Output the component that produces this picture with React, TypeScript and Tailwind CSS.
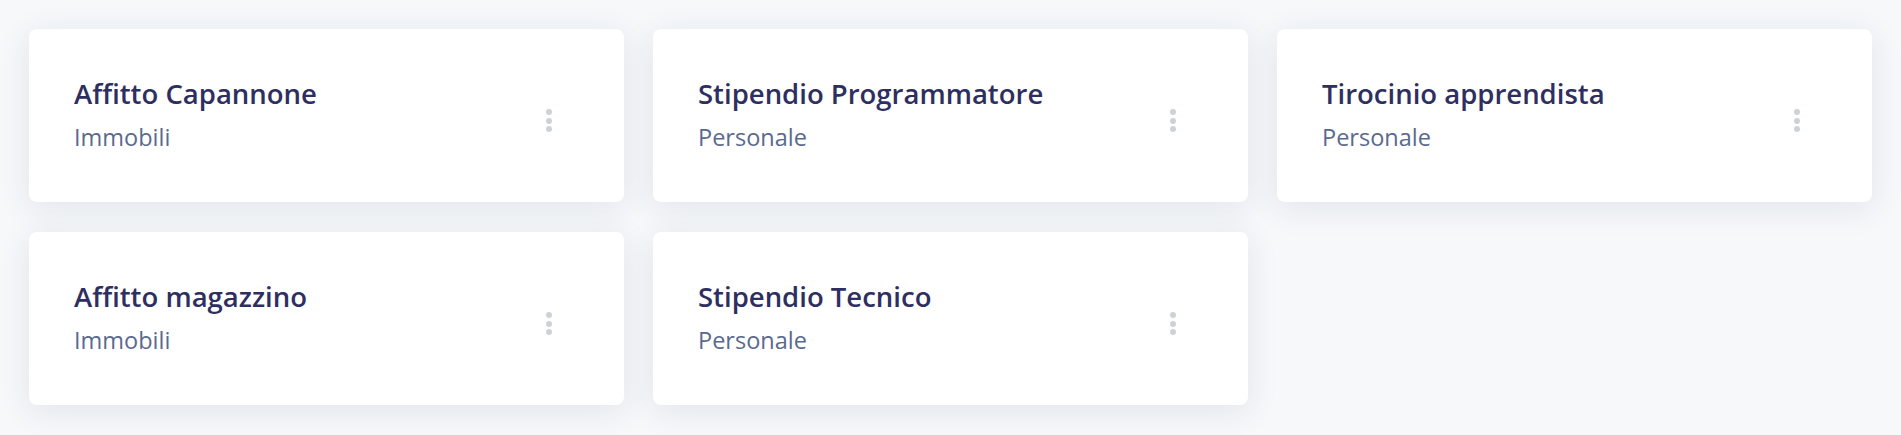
import React from "react";

const items = [
  { title: "Affitto Capannone", sub: "Immobili" },
  { title: "Stipendio Programmatore", sub: "Personale" },
  { title: "Tirocinio apprendista", sub: "Personale" },
  { title: "Affitto magazzino", sub: "Immobili" },
  { title: "Stipendio Tecnico", sub: "Personale" },
];

function Dots() {
  return (
    <div className="flex flex-col gap-[2.3px] mt-[13px]">
      <span className="block w-[6px] h-[6px] rounded-full bg-[#cdd1d8]" />
      <span className="block w-[6px] h-[6px] rounded-full bg-[#cdd1d8]" />
      <span className="block w-[6px] h-[6px] rounded-full bg-[#cdd1d8]" />
    </div>
  );
}

export default function App() {
  return (
    <div
      className="w-[1901px] h-[435px] bg-[#f6f8fa] px-[29px] pt-[29px]"
      style={{ fontFamily: '"Open Sans", "Noto Sans", sans-serif' }}
    >
      <div className="grid grid-cols-3 gap-x-[29px] gap-y-[30px]">
        {items.map((it) => (
          <div
            key={it.title}
            className="h-[173px] bg-white rounded-lg shadow-[0_6px_32px_rgba(40,60,100,0.1)] flex items-center justify-between pl-[45px] pr-[72px] pb-[3px]"
          >
            <div className="flex flex-col">
              <div className="text-[27.5px] leading-[36px] font-semibold text-[#2e2f60]">
                {it.title}
              </div>
              <div className="text-[23.5px] leading-[30px] mt-[10px] text-[#5a6a8e]">
                {it.sub}
              </div>
            </div>
            <Dots />
          </div>
        ))}
      </div>
    </div>
  );
}
